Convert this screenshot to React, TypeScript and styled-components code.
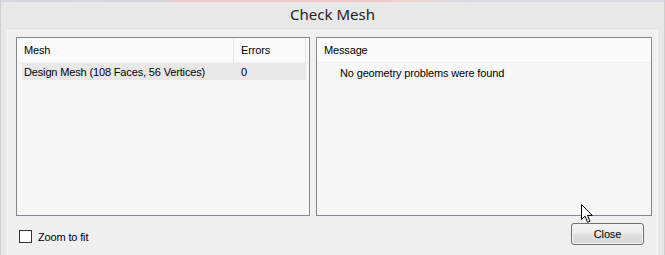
import styled, { createGlobalStyle } from "styled-components";

const GlobalStyle = createGlobalStyle`
  html, body {
    margin: 0;
    padding: 0;
    background: #e8e8e8;
  }
  body {
    font-family: "Liberation Sans", Arial, sans-serif;
    font-size: 11px;
    letter-spacing: -0.15px;
    color: #000;
  }
`;

const Window = styled.div`
  position: relative;
  width: 665px;
  height: 255px;
  box-sizing: border-box;
  background: #e8e8e8;
  border-left: 1px solid #cfcfcf;
  border-right: 1px solid #cfcfcf;
  display: flex;
  flex-direction: column;
  overflow: hidden;
`;

const TopStripe = styled.div`
  height: 2px;
  background: linear-gradient(
    90deg,
    #d6d6e0 0%,
    #d8d4dc 25%,
    #f2c8cc 27%,
    #f4c8c8 58%,
    #f0d4c4 62%,
    #d8d4e4 70%,
    #d8d8e6 100%
  );
`;

const TitleBar = styled.div`
  height: 28px;
  display: flex;
  align-items: center;
  justify-content: center;
  font-family: "Noto Sans", "Liberation Sans", sans-serif;
  font-size: 15px;
  letter-spacing: 0;
  color: #222;
  padding-bottom: 4px;
  box-sizing: border-box;
`;

const Client = styled.div`
  margin: 0 6px 0 6px;
  flex: 1;
  background: #f0f0f0;
  border: 1px solid #f6f6f6;
  border-bottom: none;
  padding: 6px 6px 0 8px;
  display: flex;
  flex-direction: column;
`;

const Panels = styled.div`
  display: grid;
  grid-template-columns: 294px 336px;
  column-gap: 6px;
  height: 179px;
`;

const ListBox = styled.div`
  background: #f7f7f7;
  border: 1px solid #828790;
  display: flex;
  flex-direction: column;
`;

const HeaderRow = styled.div`
  display: flex;
  height: 24px;
  background: #fbfbfb;
  border-bottom: 1px solid #eef0f2;
`;

const HeaderCell = styled.div<{ $w?: number }>`
  width: ${(p) => (p.$w ? `${p.$w}px` : "auto")};
  flex: ${(p) => (p.$w ? "none" : 1)};
  box-sizing: border-box;
  padding-left: 7px;
  display: flex;
  align-items: center;
  border-right: ${(p) => (p.$w ? "1px solid #e5e5e5" : "none")};
`;

const Row = styled.div<{ $selected?: boolean }>`
  display: flex;
  height: 17px;
  margin-left: 5px;
  width: 284px;
  background: ${(p) => (p.$selected ? "#e8e8e8" : "transparent")};
`;

const Cell = styled.div<{ $w: number; $pad: number }>`
  width: ${(p) => p.$w}px;
  padding-left: ${(p) => p.$pad}px;
  box-sizing: border-box;
  display: flex;
  align-items: center;
  white-space: nowrap;
`;

const MessageText = styled.div`
  padding-left: 23px;
  height: 19px;
  display: flex;
  align-items: center;
`;

const Footer = styled.div`
  flex: 1;
  display: flex;
  align-items: center;
  justify-content: space-between;
  padding: 0 7px 0 3px;
`;

const CheckLabel = styled.label`
  display: flex;
  align-items: center;
  gap: 6px;
  margin-top: 2px;
`;

const CheckBox = styled.span`
  width: 13px;
  height: 13px;
  box-sizing: border-box;
  border: 1px solid #333;
  background: #fff;
`;

const Button = styled.button`
  width: 73px;
  height: 22px;
  border: 1px solid #707070;
  border-radius: 3px;
  background: linear-gradient(#f3f3f3 0%, #ececec 50%, #e0e0e0 51%, #d6d6d6 100%);
  box-shadow: inset 0 0 0 1px #eef6fb;
  font-family: "Liberation Sans", Arial, sans-serif;
  font-size: 11px;
  letter-spacing: -0.15px;
  color: #000;
  padding: 0;
  margin-top: -4px;
`;

const Cursor = styled.svg`
  position: absolute;
  left: 580px;
  top: 204px;
`;

export default function App() {
  return (
    <>
      <GlobalStyle />
      <Window>
        <TopStripe />
        <TitleBar>Check Mesh</TitleBar>
        <Client>
          <Panels>
            <ListBox>
              <HeaderRow>
                <HeaderCell $w={217}>Mesh</HeaderCell>
                <HeaderCell $w={72}>Errors</HeaderCell>
                <HeaderCell />
              </HeaderRow>
              <Row $selected>
                <Cell $w={212} $pad={2}>
                  Design Mesh (108 Faces, 56 Vertices)
                </Cell>
                <Cell $w={72} $pad={7}>
                  0
                </Cell>
              </Row>
            </ListBox>
            <ListBox>
              <HeaderRow>
                <HeaderCell>Message</HeaderCell>
              </HeaderRow>
              <MessageText>No geometry problems were found</MessageText>
            </ListBox>
          </Panels>
          <Footer>
            <CheckLabel>
              <CheckBox />
              Zoom to fit
            </CheckLabel>
            <Button>Close</Button>
          </Footer>
        </Client>
        <Cursor width="13" height="20" viewBox="0 0 13 20">
          <path
            d="M0.5 0.5 L0.5 15.5 L4 12.2 L6.6 18.3 L9 17.3 L6.5 11.4 L11.3 11.4 Z"
            fill="#fff"
            stroke="#000"
            strokeWidth="1"
            strokeLinejoin="miter"
          />
        </Cursor>
      </Window>
    </>
  );
}
